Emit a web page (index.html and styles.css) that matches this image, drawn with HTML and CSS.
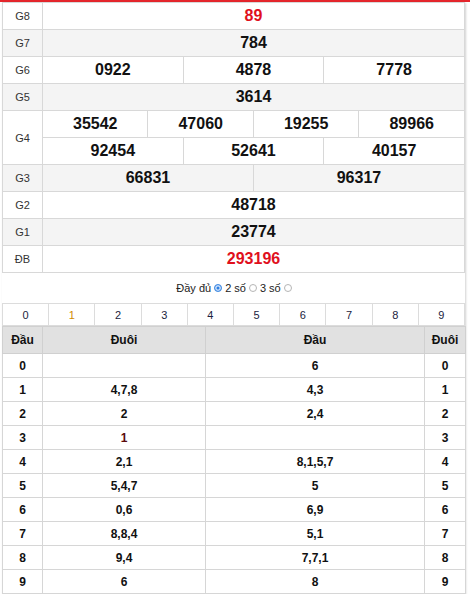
FILE: index.html
```html
<!DOCTYPE html>
<html lang="vi">
<head>
<meta charset="utf-8">
<link rel="stylesheet" href="styles.css">
</head>
<body>
<div class="topbar"></div>
<div class="wrap">
  <table class="kq">
    <colgroup>
      <col class="lbl-col">
      <col span="12">
    </colgroup>
    <tr><td class="lbl">G8</td><td colspan="12" class="num red">89</td></tr>
    <tr class="alt"><td class="lbl">G7</td><td colspan="12" class="num">784</td></tr>
    <tr><td class="lbl">G6</td><td colspan="4" class="num">0922</td><td colspan="4" class="num">4878</td><td colspan="4" class="num">7778</td></tr>
    <tr class="alt"><td class="lbl">G5</td><td colspan="12" class="num">3614</td></tr>
    <tr><td class="lbl" rowspan="2">G4</td><td colspan="3" class="num">35542</td><td colspan="3" class="num">47060</td><td colspan="3" class="num">19255</td><td colspan="3" class="num">89966</td></tr>
    <tr><td colspan="4" class="num">92454</td><td colspan="4" class="num">52641</td><td colspan="4" class="num">40157</td></tr>
    <tr class="alt"><td class="lbl">G3</td><td colspan="6" class="num">66831</td><td colspan="6" class="num">96317</td></tr>
    <tr><td class="lbl">G2</td><td colspan="12" class="num">48718</td></tr>
    <tr class="alt"><td class="lbl">G1</td><td colspan="12" class="num">23774</td></tr>
    <tr><td class="lbl">ĐB</td><td colspan="12" class="num red">293196</td></tr>
  </table>

  <div class="opts">
    <span>Đầy đủ</span><span class="radio on"></span>
    <span>2 số</span><span class="radio"></span>
    <span>3 số</span><span class="radio"></span>
  </div>

  <div class="digits">
    <span>0</span><span class="hl">1</span><span>2</span><span>3</span><span>4</span>
    <span>5</span><span>6</span><span>7</span><span>8</span><span>9</span>
  </div>

  <table class="lt">
    <colgroup>
      <col class="c1"><col class="c2"><col class="c3"><col class="c4">
    </colgroup>
    <tr class="head"><th>Đầu</th><th>Đuôi</th><th>Đầu</th><th>Đuôi</th></tr>
    <tr><td>0</td><td></td><td>6</td><td>0</td></tr>
    <tr><td>1</td><td>4,7,8</td><td>4,3</td><td>1</td></tr>
    <tr><td>2</td><td>2</td><td>2,4</td><td>2</td></tr>
    <tr><td>3</td><td class="dr">1</td><td></td><td>3</td></tr>
    <tr><td>4</td><td>2,1</td><td>8,1,5,7</td><td>4</td></tr>
    <tr><td>5</td><td>5,4,7</td><td>5</td><td>5</td></tr>
    <tr><td>6</td><td>0,6</td><td>6,9</td><td>6</td></tr>
    <tr><td>7</td><td>8,8,4</td><td>5,1</td><td>7</td></tr>
    <tr><td>8</td><td>9,4</td><td>7,7,1</td><td>8</td></tr>
    <tr><td>9</td><td>6</td><td>8</td><td>9</td></tr>
  </table>
</div>
</body>
</html>
```
FILE: styles.css
```css
* { box-sizing: border-box; }
html, body { margin: 0; padding: 0; background: #fff; }
body { font-family: "Liberation Sans", Arial, sans-serif; color: #111; }

.topbar { height: 2px; background: #e5262c; }

.wrap {
  width: 463px;
  margin-left: 2px;
  box-shadow: 1px 1px 2px rgba(0,0,0,0.18);
}

.kq {
  width: 463px;
  border-collapse: collapse;
  table-layout: fixed;
}
.kq .lbl-col { width: 40px; }
.kq td {
  border: 1px solid #d8d8d8;
  height: 27px;
  padding: 0;
  text-align: center;
  vertical-align: middle;
}
.kq tr.alt td { background: #f4f4f4; }
.kq .lbl { font-size: 11px; color: #333; }
.kq .num { font-size: 16px; font-weight: bold; color: #111; }
.kq .num.red { color: #e0101c; }

.opts {
  height: 30px;
  display: flex;
  align-items: center;
  justify-content: center;
  font-size: 11px;
  color: #222;
  gap: 2px;
  padding-left: 2px;
}
.radio {
  display: inline-block;
  width: 8px;
  height: 8px;
  border-radius: 50%;
  border: 1px solid #b5b5b5;
  background: #fff;
  margin: 0 1px 0 1px;
}
.radio.on {
  border-color: #4a90e2;
  background: #2d7fe3;
  box-shadow: inset 0 0 0 1.5px #cfe2fb;
}

.digits {
  display: grid;
  grid-template-columns: repeat(10, 1fr);
  height: 23px;
  border: 1px solid #dcdcdc;
  border-right: none;
}
.digits span {
  border-right: 1px solid #dcdcdc;
  display: flex;
  align-items: center;
  justify-content: center;
  font-size: 11px;
  color: #1a2340;
}
.digits span.hl { color: #d08a00; }

.lt {
  width: 463px;
  border-collapse: collapse;
  table-layout: fixed;
}
.lt .c1 { width: 40px; }
.lt .c2 { width: 163px; }
.lt .c3 { width: 219px; }
.lt .c4 { width: 41px; }
.lt th, .lt td {
  border: 1px solid #d6d6d6;
  padding: 0;
  text-align: center;
  vertical-align: middle;
  font-size: 12px;
  font-weight: bold;
  color: #111;
}
.lt th { background: #e1e1e1; height: 27px; border-color: #d0d0d0; }
.lt td { height: 24px; }
.lt td.dr { color: #5a0a0a; }
```
